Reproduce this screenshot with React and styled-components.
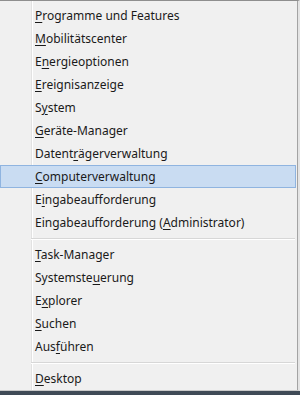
import React from "react";
import styled, { createGlobalStyle } from "styled-components";

const GlobalStyle = createGlobalStyle`
  html, body {
    margin: 0;
    padding: 0;
    background: #4f5c69;
  }
  body {
    width: 300px;
    height: 395px;
    overflow: hidden;
  }
`;

const Screen = styled.div`
  width: 300px;
  height: 395px;
  display: flex;
  flex-direction: column;
  background: linear-gradient(#6b7683, #3f4a56);
`;

const Menu = styled.ul`
  list-style: none;
  margin: 0;
  padding: 3px 0 0;
  box-sizing: border-box;
  width: 300px;
  height: 391px;
  border-top: 1px solid #8e8e8e;
  border-right: 2px solid #e4e4e4;
  border-bottom: 1px solid #c9c9c9;
  box-shadow: inset -1px 0 0 #a3a3a3;
  background:
    linear-gradient(90deg, transparent 31px, #e2e2e2 31px, #e2e2e2 32px, #ffffff 32px, #ffffff 33px, transparent 33px),
    #f0f0f0;
  font-family: "Noto Sans", "Open Sans", "DejaVu Sans", sans-serif;
  font-size: 12px;
  color: #1a1a1a;
`;

const Item = styled.li`
  height: 23px;
  line-height: 22px;
  box-sizing: border-box;
  padding-left: 34px;
  margin: 0 2px 0 0;
  border: 1px solid ${({ $active }) => ($active ? "#8fb4e0" : "transparent")};
  background: ${({ $active }) => ($active ? "#c9dcf2" : "transparent")};
  white-space: nowrap;
`;

const Key = styled.span`
  text-decoration: underline;
  text-underline-offset: 2px;
`;

const Separator = styled.li`
  height: 9px;
  display: flex;
  align-items: center;
  padding-left: 31px;
  &::after {
    content: "";
    flex: 1;
    margin-right: 3px;
    height: 1px;
    background: #d7d7d7;
    box-shadow: 0 1px 0 #ffffff;
  }
`;

const groups = [
  [
    ["", "P", "rogramme und Features"],
    ["", "M", "obilitätscenter"],
    ["E", "n", "ergieoptionen"],
    ["", "E", "reignisanzeige"],
    ["S", "y", "stem"],
    ["", "G", "eräte-Manager"],
    ["Datent", "r", "ägerverwaltung"],
    ["", "C", "omputerverwaltung", true],
    ["E", "i", "ngabeaufforderung"],
    ["Eingabeaufforderung (", "A", "dministrator)"],
  ],
  [
    ["", "T", "ask-Manager"],
    ["Systemste", "u", "erung"],
    ["E", "x", "plorer"],
    ["", "S", "uchen"],
    ["Aus", "f", "ühren"],
  ],
  [["", "D", "esktop"]],
];

export default function App() {
  return (
    <>
      <GlobalStyle />
      <Screen>
        <Menu>
          {groups.map((group, gi) => (
            <React.Fragment key={gi}>
              {gi > 0 && <Separator />}
              {group.map(([pre, key, post, active]) => (
                <Item key={pre + key + post} $active={active}>
                  {pre}
                  <Key>{key}</Key>
                  {post}
                </Item>
              ))}
            </React.Fragment>
          ))}
        </Menu>
      </Screen>
    </>
  );
}
